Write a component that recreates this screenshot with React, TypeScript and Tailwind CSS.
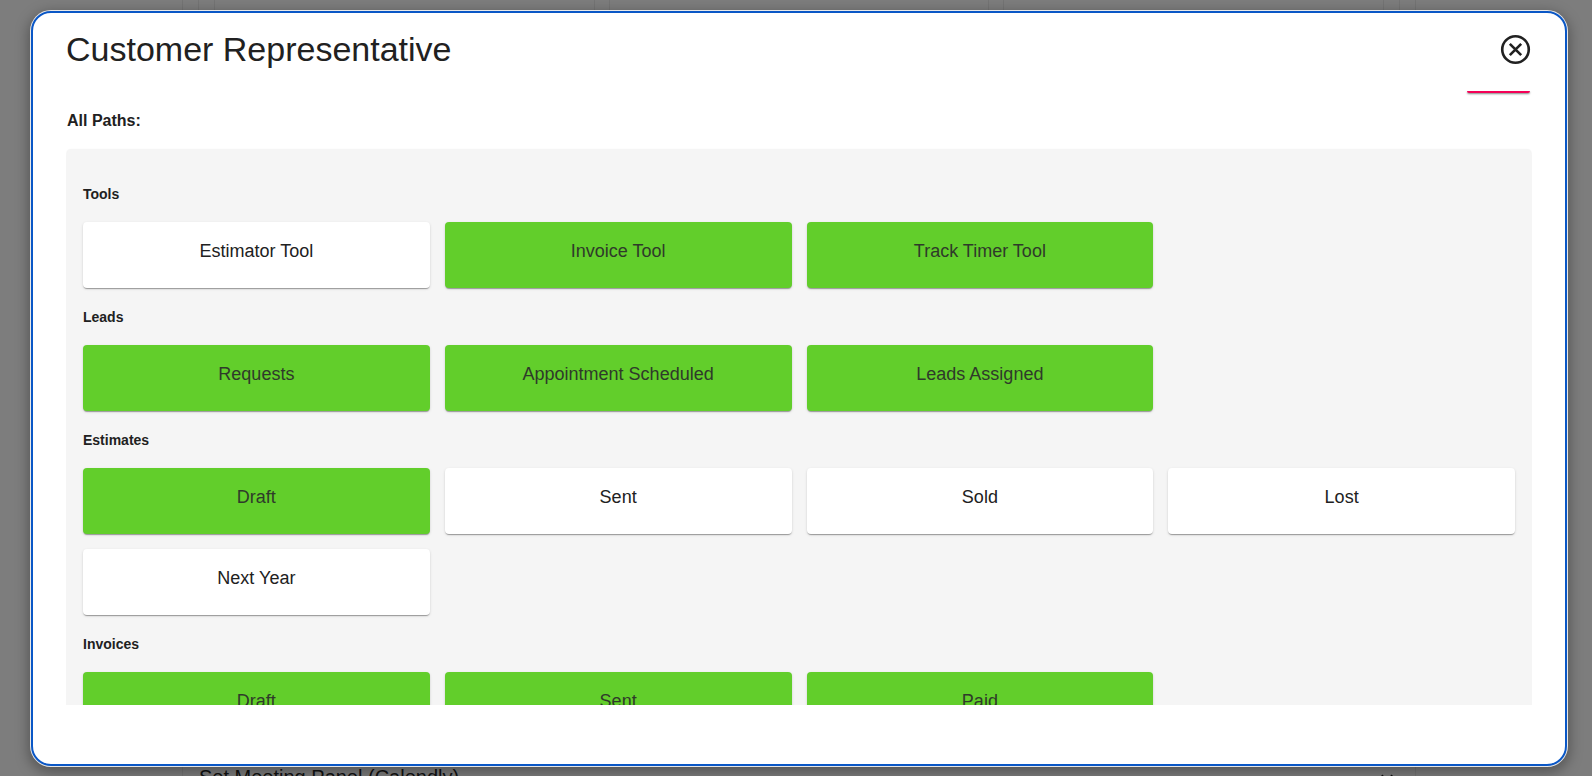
type Path = { name: string; active: boolean };
type Group = { title: string; paths: Path[] };

const groups: Group[] = [
  {
    title: "Tools",
    paths: [
      { name: "Estimator Tool", active: false },
      { name: "Invoice Tool", active: true },
      { name: "Track Timer Tool", active: true },
    ],
  },
  {
    title: "Leads",
    paths: [
      { name: "Requests", active: true },
      { name: "Appointment Scheduled", active: true },
      { name: "Leads Assigned", active: true },
    ],
  },
  {
    title: "Estimates",
    paths: [
      { name: "Draft", active: true },
      { name: "Sent", active: false },
      { name: "Sold", active: false },
      { name: "Lost", active: false },
      { name: "Next Year", active: false },
    ],
  },
  {
    title: "Invoices",
    paths: [
      { name: "Draft", active: true },
      { name: "Sent", active: true },
      { name: "Paid", active: true },
    ],
  },
];

function CloseIcon() {
  return (
    <svg viewBox="0 0 24 24" className="size-[35px]" fill="none" stroke="currentColor" aria-hidden="true">
      <circle cx="12" cy="12" r="9.1" strokeWidth="1.8" />
      <path d="M8.1 8.1l7.8 7.8M15.9 8.1l-7.8 7.8" strokeWidth="1.8" />
    </svg>
  );
}

function PathCard({ name, active }: Path) {
  return (
    <button
      type="button"
      aria-pressed={active}
      className={
        "rounded px-4 pt-[17px] pb-[25px] text-center text-lg leading-6 shadow-[0_2px_1px_-1px_rgba(0,0,0,0.2),0_1px_1px_0_rgba(0,0,0,0.14),0_1px_3px_0_rgba(0,0,0,0.12)] " +
        (active ? "bg-[#62ce2b] text-[#2f3a2a]" : "bg-white text-[#212121]")
      }
    >
      {name}
    </button>
  );
}

function PathGroup({ title, paths }: Group) {
  return (
    <section>
      <h3 className="pt-[19px] pb-[18px] text-sm leading-5 font-bold">{title}</h3>
      <div className="grid grid-cols-4 gap-[15px]">
        {paths.map((path) => (
          <PathCard key={path.name} {...path} />
        ))}
      </div>
    </section>
  );
}

function Backdrop() {
  return (
    <div className="flex h-full flex-col pr-[176px] pl-[182px]" aria-hidden="true">
      <div className="flex-1 border-x border-[#747474] px-[15px]">
        <div className="grid h-full grid-cols-3 gap-[14px] border-x border-[#747474] px-[15px]">
          <div className="border-x border-[#747474]" />
          <div className="border-x border-[#747474]" />
          <div className="border-x border-[#747474]" />
        </div>
      </div>
      <div className="flex h-5 justify-between border-x border-[#747474] pr-4 pl-4 text-xl leading-[42px] text-[#111]">
        <span>Set Meeting Panel (Calendly)</span>
        <svg viewBox="0 0 24 24" className="mt-2.5 size-6" fill="none" stroke="currentColor" strokeWidth="2">
          <path d="M6.7 9.3l5.3 5.3 5.3-5.3" />
        </svg>
      </div>
    </div>
  );
}

export default function App() {
  return (
    <div className="relative h-screen overflow-hidden bg-[#7d7d7d] font-['Liberation_Sans',Arial,sans-serif] text-[#212121]">
      <Backdrop />
      <div
        role="dialog"
        aria-modal="true"
        aria-labelledby="dialog-title"
        className="absolute top-[11px] right-[25px] bottom-[10px] left-[31px] flex flex-col rounded-[20px] border-2 border-[#0a57c6] bg-white px-[33px] shadow-[0_0_0_1px_rgba(255,255,255,0.85),0_4px_14px_2px_rgba(0,0,0,0.35)]"
      >
        <header className="flex h-[78px] shrink-0 items-start justify-between pt-[18px]">
          <h1 id="dialog-title" className="text-[34px] leading-9">
            Customer Representative
          </h1>
          <button type="button" aria-label="Close" className="-mr-px pt-px">
            <CloseIcon />
          </button>
        </header>
        <div className="min-h-0 flex-1 overflow-y-auto px-px [scrollbar-width:none]">
          <div className="mr-px ml-auto h-0.5 w-[63px] rounded-b bg-[#f50057] shadow-[0_1px_2px_rgba(0,0,0,0.5)]" />
          <h2 className="pt-[18px] pb-[18px] text-base leading-5 font-bold">All Paths:</h2>
          <div className="rounded bg-[#f5f5f5] p-4 shadow-[0_1px_2px_rgba(0,0,0,0.15)]">
            {groups.map((group) => (
              <PathGroup key={group.title} {...group} />
            ))}
          </div>
        </div>
        <footer className="h-[59px] shrink-0" />
      </div>
    </div>
  );
}
